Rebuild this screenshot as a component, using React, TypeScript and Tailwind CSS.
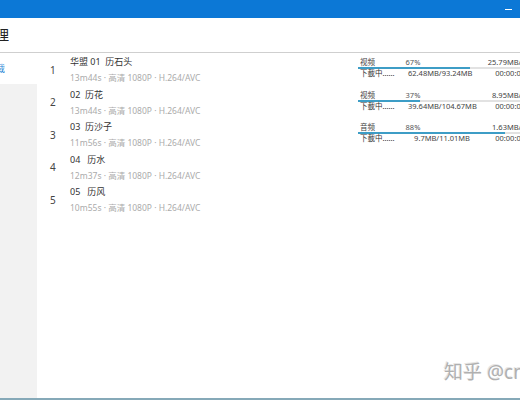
import React from 'react';

const episodes = [
  { no: 1, title: '华盟 01  历石头', meta: '13m44s · 高清 1080P · H.264/AVC' },
  { no: 2, title: '02  历花', meta: '13m44s · 高清 1080P · H.264/AVC' },
  { no: 3, title: '03  历沙子', meta: '11m56s · 高清 1080P · H.264/AVC' },
  { no: 4, title: '04   历水', meta: '12m37s · 高清 1080P · H.264/AVC' },
  { no: 5, title: '05   历风', meta: '10m55s · 高清 1080P · H.264/AVC' },
];

const tasks = [
  { kind: '视频', pct: 67, speed: '25.79MB/s', size: '62.48MB/93.24MB', time: '00:00:02' },
  { kind: '视频', pct: 37, speed: '8.95MB/s', size: '39.64MB/104.67MB', time: '00:00:08' },
  { kind: '音频', pct: 88, speed: '1.63MB/s', size: '9.7MB/11.01MB', time: '00:00:00' },
];

export default function App() {
  return (
    <div
      className="relative w-[520px] h-[400px] overflow-hidden bg-white flex flex-col"
      style={{ fontFamily: '"Noto Sans", "Noto Sans CJK SC", sans-serif' }}
    >
      {/* title bar */}
      <div className="h-[18px] shrink-0 bg-[#0c78d6] flex items-center justify-end pr-[8px]">
        <div className="w-[7px] h-[1px] bg-white" />
      </div>

      {/* header */}
      <div className="h-[35px] shrink-0 flex items-center border-b border-[#cfcfcf]">
        <div className="w-[9px] overflow-hidden flex justify-end">
          <span className="whitespace-nowrap text-[14px] leading-[18px] text-[#222]">下载管理</span>
        </div>
      </div>

      <div className="flex-1 flex min-h-0">
        {/* sidebar */}
        <div className="w-[37px] shrink-0 flex flex-col">
          <div className="h-[31px] bg-white flex items-center">
            <div className="w-[5px] overflow-hidden flex justify-end">
              <span className="whitespace-nowrap text-[9px] text-[#2b86d6]">下载</span>
            </div>
          </div>
          <div className="flex-1 bg-[#f2f2f2]" />
        </div>

        {/* episode list */}
        <div className="flex-1 flex flex-col pt-[1px]">
          {episodes.map((e) => (
            <div key={e.no} className="h-[32.5px] flex items-center">
              <div className="w-[33px] pl-[13px] text-[10px] text-[#444]">{e.no}</div>
              <div className="flex flex-col">
                <div className="text-[9px] leading-[16px] text-[#333] whitespace-pre">{e.title}</div>
                <div className="text-[8.5px] leading-[16px] text-[#ababab] whitespace-pre">{e.meta}</div>
              </div>
            </div>
          ))}
        </div>

        {/* download tasks */}
        <div className="w-[162px] shrink-0 overflow-hidden">
          <div className="w-[167px] pt-[4px] flex flex-col">
            {tasks.map((t, i) => (
              <div key={i} className="h-[32.5px] flex flex-col text-[7.5px] text-[#444]">
                <div className="h-[10px] leading-[10px] flex">
                  <span className="w-[34px] pl-[2px]">{t.kind}</span>
                  <span className="w-[42px] text-center text-[#555]">{t.pct}%</span>
                  <span className="flex-1 text-right">{t.speed}</span>
                </div>
                <div className="h-[2px] bg-[#e2e2e2]">
                  <div className="h-full bg-[#3d9dc6]" style={{ width: `${t.pct}%` }} />
                </div>
                <div className="h-[9px] leading-[9px] flex">
                  <span className="w-[50px] pl-[2px] text-[#333]">下載中......</span>
                  <span className="w-[62px] text-right">{t.size}</span>
                  <span className="flex-1 text-right">{t.time}</span>
                </div>
              </div>
            ))}
          </div>
        </div>
      </div>

      <div className="h-[2px] shrink-0 bg-[#86a9b8]" />

      {/* watermark */}
      <div className="absolute left-[444px] top-[358px] whitespace-nowrap text-[19px] text-[#b0b0b0] [text-shadow:1px_1px_0_#ffffff,-1px_-1px_0_#e6e6e6]">
        知乎 @cnbeta
      </div>
    </div>
  );
}
